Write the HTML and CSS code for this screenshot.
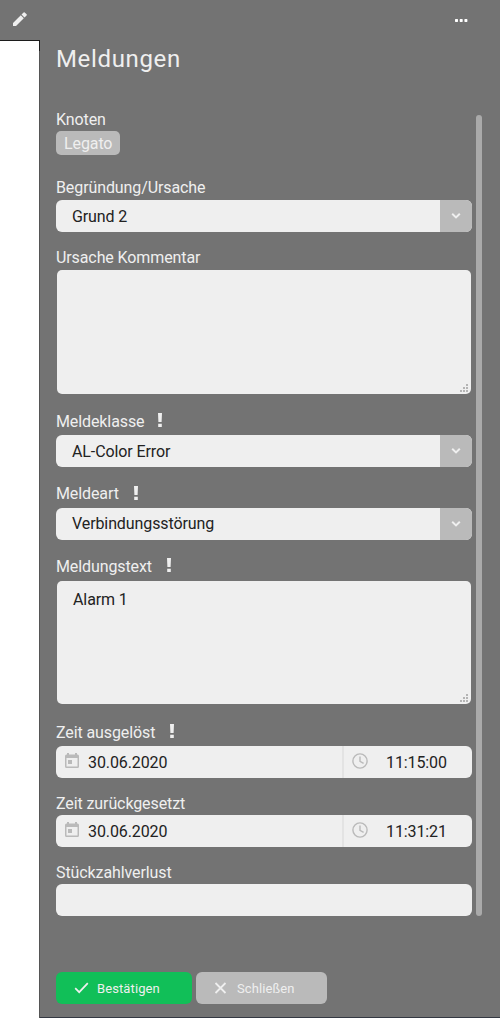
FILE: index.html
```html
<!DOCTYPE html>
<html lang="de">
<head>
<meta charset="utf-8">
<title>Meldungen</title>
<link rel="stylesheet" href="styles.css">
</head>
<body>
<svg width="0" height="0" class="defs">
  <symbol id="chevron" viewBox="0 0 10 8"><path d="M1.200 1.800 5 5.400 8.800 1.800" fill="none" stroke="currentColor" stroke-width="2"/></symbol>
  <symbol id="calendar" viewBox="0 0 14 15"><path d="M2 0h2v1.500h6V0h2v1.500h.5A1.500 1.500 0 0 1 14 3v10.500a1.500 1.500 0 0 1-1.500 1.500h-11A1.500 1.500 0 0 1 0 13.500V3A1.500 1.500 0 0 1 1.500 1.500H2zM1.500 5v8.500h11V5zM3 7h4v4H3z" fill="currentColor" fill-rule="evenodd"/></symbol>
  <symbol id="clock" viewBox="0 0 16 16"><g fill="none" stroke="currentColor" stroke-width="1.400"><circle cx="8" cy="8" r="7.100"/><path d="M8 3.600v4.800l3.600 2"/></g></symbol>
  <symbol id="grip" viewBox="0 0 8 8"><path d="M6 0h2v2H6zM3 3h2v2H3zM6 3h2v2H6zM0 6h2v2H0zM3 6h2v2H3zM6 6h2v2H6z" fill="currentColor"/></symbol>
  <symbol id="bang" viewBox="0 0 4 14"><path d="M0 0h4L3.600 9H.4zM.2 10.700h3.600V14H.2z" fill="currentColor"/></symbol>
</svg>
<div class="app">
  <aside class="rail">
    <div class="rail-head">
      <svg class="pencil" viewBox="0 0 14 14"><path d="M0 11v3h3l7.800-7.800-3-3zM8.500 2.500l3 3 2.100-2.100a.8.8 0 0 0 0-1.100L11.700.4a.8.8 0 0 0-1.100 0z" fill="currentColor"/></svg>
    </div>
    <div class="rail-body"><div class="edge"></div></div>
  </aside>
  <main class="panel">
    <header class="head">
      <svg class="more" viewBox="0 0 13 3"><path d="M0 .5.5 0h2l.5.5v2l-.5.5h-2L0 2.500zM4.700.5l.5-.5h2l.5.5v2l-.5.5h-2l-.5-.5zM9.400.5l.5-.5h2l.5.5v2l-.5.5h-2l-.5-.5z" fill="currentColor"/></svg>
      <h1>Meldungen</h1>
    </header>
    <div class="scroll">
      <form class="form">
        <div class="group node"><div class="label">Knoten</div><span class="chip">Legato</span></div>
        <div class="group reason"><div class="label">Begründung/Ursache</div>
          <div class="field select"><span>Grund 2</span><i><svg><use href="#chevron"/></svg></i></div></div>
        <div class="group comment"><div class="label">Ursache Kommentar</div>
          <div class="area"><svg><use href="#grip"/></svg></div></div>
        <div class="group class"><div class="label">Meldeklasse<svg><use href="#bang"/></svg></div>
          <div class="field select"><span>AL-Color Error</span><i><svg><use href="#chevron"/></svg></i></div></div>
        <div class="group kind"><div class="label">Meldeart<svg><use href="#bang"/></svg></div>
          <div class="field select"><span>Verbindungsstörung</span><i><svg><use href="#chevron"/></svg></i></div></div>
        <div class="group message"><div class="label">Meldungstext<svg><use href="#bang"/></svg></div>
          <div class="area">Alarm 1<svg><use href="#grip"/></svg></div></div>
        <div class="group raised"><div class="label">Zeit ausgelöst<svg><use href="#bang"/></svg></div>
          <div class="field when"><div class="date"><svg><use href="#calendar"/></svg>30.06.2020</div><div class="time"><svg><use href="#clock"/></svg>11:15:00</div></div></div>
        <div class="group reset"><div class="label">Zeit zurückgesetzt</div>
          <div class="field when"><div class="date"><svg><use href="#calendar"/></svg>30.06.2020</div><div class="time"><svg><use href="#clock"/></svg>11:31:21</div></div></div>
        <div class="group loss"><div class="label">Stückzahlverlust</div><div class="field"></div></div>
      </form>
      <div class="bar"></div>
    </div>
    <footer class="actions">
      <button class="confirm"><svg viewBox="0 0 14 12"><path d="M.7 6.200 4.700 10.200 13.300 1.200" fill="none" stroke="currentColor" stroke-width="1.700"/></svg>Bestätigen</button>
      <button class="close"><svg viewBox="0 0 12 12"><path d="M1 1l10 10M11 1 1 11" fill="none" stroke="currentColor" stroke-width="1.800"/></svg>Schließen</button>
    </footer>
  </main>
</div>
</body>
</html>
```
FILE: styles.css
```css
* { box-sizing: border-box; }
body { margin: 0; font: 16px/24px Roboto, sans-serif; letter-spacing: -.1px; color: #efefef; background: #737373; }
svg { display: block; flex: none; }
.defs { position: absolute; }
.app { display: flex; height: 1018px; }
.rail { width: 40px; display: flex; flex-direction: column; }
.rail-head { height: 41px; border-bottom: 1px solid #1c1c1c; padding: 12px 0 0 13px; }
.pencil { width: 14px; height: 14px; }
.rail-body { flex: 1; background: #fff; display: flex; justify-content: flex-end; }
.edge { width: 1px; background: linear-gradient(#1c1c1c 10px, #555 10px); }
.panel { width: 460px; display: flex; flex-direction: column; padding-left: 16px; border-bottom: 1px solid #343842; }
.head { height: 107px; padding-top: 19px; }
.more { width: 13px; height: 3px; margin-left: 399px; color: #fff; }
h1 { margin: 21px 0 0; font-size: 24px; font-weight: 400; line-height: 32px; letter-spacing: .65px; }
.scroll { display: flex; height: 809px; }
.form { width: 416px; }
.bar { width: 6px; margin: 8px 0 0 4px; background: #aaa; border-radius: 3px; }
.label { display: flex; height: 24px; }
.label svg { width: 4px; height: 14px; margin: 3px 0 0 15px; }
.chip { display: block; width: 64px; height: 24px; padding-left: 8px; line-height: 26px; background: #bababa; border-radius: 5px; }
.field { display: flex; height: 32px; line-height: 34px; color: #222; background: #efefef; border-radius: 6px; overflow: hidden; }
.select { padding-left: 16px; justify-content: space-between; }
.select i { display: grid; place-items: center; width: 32px; background: #bababa; color: #efefef; }
.select i svg { width: 10px; height: 8px; }
.area { display: flex; justify-content: space-between; align-items: flex-start; margin: 0 1px; padding: 7px 3px 2px 16px; height: 124px; color: #222; background: #efefef; border-radius: 5px; }
.area svg { width: 8px; height: 8px; margin-left: auto; align-self: flex-end; color: #b4b4b4; }
.node .label, .raised .label, .reset .label, .loss .label { line-height: 26px; }
.reason { margin-top: 21px; }
.comment { margin-top: 14px; }
.class { margin-top: 16px; }
.class .label { height: 25px; }
.class .label svg { margin-left: 14px; }
.kind { margin-top: 15px; }
.kind .label { height: 26px; }
.kind .label svg { margin-top: 4px; }
.kind .field { line-height: 32px; }
.message { margin-top: 15px; }
.message .label { height: 26px; }
.message .area { height: 123px; }
.raised { margin-top: 16px; }
.raised .label { height: 26px; }
.raised .label svg { margin-top: 4px; }
.reset { margin-top: 13px; }
.loss { margin-top: 13px; }
.when svg { color: #bababa; }
.date { display: flex; width: 286px; padding-left: 9px; }
.date svg { width: 14px; height: 15px; margin: 7px 9px 0 0; }
.time { display: flex; flex: 1; border-left: 2px solid #e3e3e3; padding-left: 8px; }
.time svg { width: 16px; height: 16px; margin: 7px 18px 0 0; }
.actions { display: flex; gap: 4px; margin-top: 56px; }
button { display: flex; align-items: center; height: 32px; padding: 0 0 0 18px; border: 0; border-radius: 6px; font: 13px Roboto, sans-serif; letter-spacing: .1px; color: #efefef; }
.confirm { width: 136px; background: #11bf58; }
.confirm svg { width: 15px; height: 12px; margin-right: 8px; }
.close { width: 131px; background: #bababa; }
.close svg { width: 13px; height: 12px; margin-right: 10px; }
```
